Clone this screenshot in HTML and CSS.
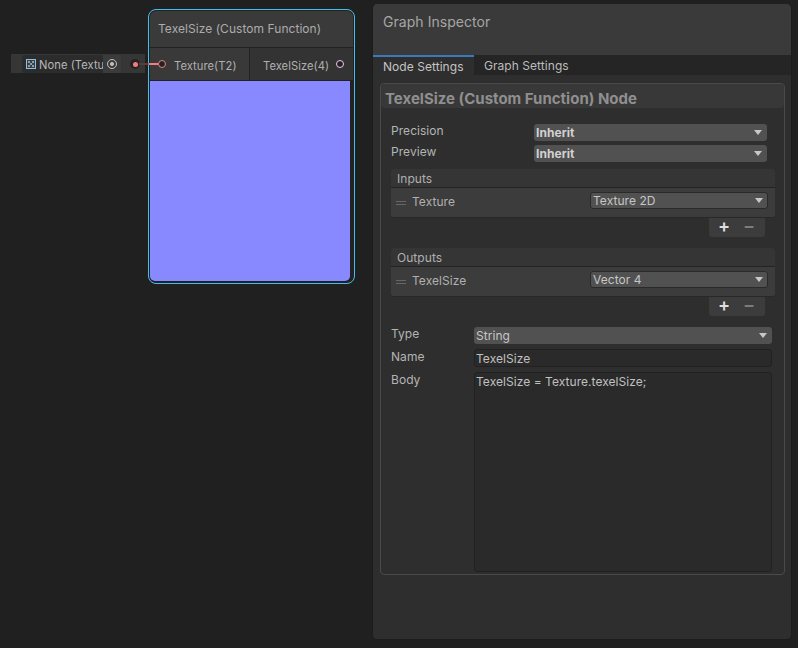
FILE: index.html
```html
<!DOCTYPE html>
<html lang="en">
<head>
    <meta charset="UTF-8">
    <title>Graph Inspector</title>
    <link rel="stylesheet" href="styles.css">
</head>
<body>

<div class="canvas">
    <div class="prop-slot">
        <div class="prop-field">
            <svg class="tex-icon" width="10" height="10" viewBox="0 0 10 10">
                <rect x="0.5" y="0.5" width="9" height="9" fill="#3a4248" stroke="#7fc4e6"/>
                <path d="M2 2h2v2H2zM6 2h2v2H6zM4 4h2v2H4zM2 6h2v2H2zM6 6h2v2H6z" fill="#9a9a9a"/>
            </svg>
            <span class="prop-text">None (Textu</span>
            <span class="prop-picker"><span class="picker-ring"><span class="picker-dot"></span></span></span>
        </div>
        <span class="slot-port"><span class="slot-dot"></span></span>
    </div>

    <div class="node">
        <div class="node-title">TexelSize (Custom Function)</div>
        <div class="node-ports">
            <div class="port-in">
                <span class="port-ring port-ring-in"></span>
                <span>Texture(T2)</span>
            </div>
            <div class="port-out">
                <span>TexelSize(4)</span>
                <span class="port-ring port-ring-out"></span>
            </div>
        </div>
        <div class="node-preview"></div>
    </div>
    <div class="edge"></div>
</div>

<div class="inspector">
    <div class="inspector-head">Graph Inspector</div>
    <div class="tabs">
        <div class="tab tab-active">Node Settings</div>
        <div class="tab">Graph Settings</div>
    </div>
    <div class="inspector-body">
        <div class="section">
            <div class="section-title">TexelSize (Custom Function) Node</div>

            <div class="settings">
                <div class="row">
                    <label class="row-label">Precision</label>
                    <div class="dropdown dropdown-bold">Inherit<span class="caret"></span></div>
                </div>
                <div class="row">
                    <label class="row-label">Preview</label>
                    <div class="dropdown dropdown-bold">Inherit<span class="caret"></span></div>
                </div>
            </div>

            <div class="list">
                <div class="list-head">Inputs</div>
                <div class="list-body">
                    <span class="handle"></span>
                    <span class="list-name">Texture</span>
                    <div class="dropdown list-drop">Texture 2D<span class="caret"></span></div>
                </div>
                <div class="list-foot"><span class="plus">+</span><span class="minus">&minus;</span></div>
            </div>

            <div class="list list-second">
                <div class="list-head">Outputs</div>
                <div class="list-body">
                    <span class="handle"></span>
                    <span class="list-name">TexelSize</span>
                    <div class="dropdown list-drop">Vector 4<span class="caret"></span></div>
                </div>
                <div class="list-foot"><span class="plus">+</span><span class="minus">&minus;</span></div>
            </div>

            <div class="code-form">
                <div class="form-row">
                    <label class="form-label form-label-type">Type</label>
                    <div class="dropdown">String<span class="caret"></span></div>
                </div>
                <div class="form-row">
                    <label class="form-label">Name</label>
                    <div class="text-field">TexelSize</div>
                </div>
                <div class="form-row">
                    <label class="form-label">Body</label>
                    <div class="text-field text-area">TexelSize = Texture.texelSize;</div>
                </div>
            </div>
        </div>
    </div>
</div>

</body>
</html>
```

FILE: styles.css
```css
* {
    box-sizing: border-box;
}
html, body {
    height: 100%;
}
body {
    margin: 0;
    width: 798px;
    height: 648px;
    overflow: hidden;
    display: flex;
    background-color: #202020;
    color: #c4c4c4;
    font-family: Inter, "Noto Sans", sans-serif;
    font-size: 12px;
    line-height: 16px;
    letter-spacing: 0.05px;
}

/* graph canvas, things sit at their own spot here */
.canvas {
    position: relative;
    width: 372px;
    flex: none;
}
.prop-slot {
    position: absolute;
    left: 11px;
    top: 54px;
    width: 134px;
    height: 19px;
    background: #363636;
}
.prop-field {
    position: absolute;
    left: 11px;
    top: 1px;
    width: 99px;
    height: 18px;
    display: flex;
    align-items: center;
    background: #2c2c2c;
    border-radius: 3px;
    overflow: hidden;
}
.tex-icon {
    margin-left: 4px;
    flex: none;
}
.prop-text {
    margin-left: 3px;
    padding-top: 1px;
    width: 64px;
    flex: none;
    overflow: hidden;
    white-space: nowrap;
    font-size: 11.2px;
    color: #b8b8b8;
}
.prop-picker {
    width: 18px;
    height: 18px;
    flex: none;
    display: flex;
    align-items: center;
    justify-content: center;
    background: #3b3b3b;
}
.picker-ring {
    width: 10px;
    height: 10px;
    border: 1px solid #c4c4c4;
    border-radius: 50%;
    display: flex;
    align-items: center;
    justify-content: center;
}
.picker-dot {
    width: 4px;
    height: 4px;
    background: #c4c4c4;
    border-radius: 50%;
}
.slot-port {
    position: absolute;
    left: 119px;
    top: 5px;
    width: 10px;
    height: 10px;
    display: flex;
    align-items: center;
    justify-content: center;
    background: #232323;
    border-radius: 50%;
}
.slot-dot {
    width: 5px;
    height: 5px;
    background: #f27c7c;
    border-radius: 50%;
}
.edge {
    position: absolute;
    left: 139px;
    top: 63px;
    width: 19px;
    height: 2px;
    background: linear-gradient(90deg, #5a3c3c, #5a3c3c 45%, #f08080 55%);
}
.node {
    position: absolute;
    left: 148px;
    top: 9px;
    width: 207px;
    height: 275px;
    padding: 1px;
    border: 1px solid #44c0ec;
    border-radius: 8px;
    background: #222222;
    overflow: hidden;
}
.node-title {
    height: 36px;
    padding: 10px 8px 0;
    background: #3a3a3a;
    border-radius: 6px 6px 0 0;
    font-size: 12px;
    color: #acacac;
}
.node-ports {
    display: flex;
    height: 32px;
    margin-top: 1px;
    font-size: 11.2px;
    color: #b0b0b0;
}
.port-in {
    width: 99px;
    display: flex;
    align-items: center;
    padding: 4px 0 0 24px;
    background: #393939;
    position: relative;
}
.port-out {
    flex: 1;
    display: flex;
    align-items: center;
    padding: 4px 0 0 13px;
    margin-left: 1px;
    background: #333333;
    position: relative;
}
.port-ring {
    position: absolute;
    top: 12px;
    width: 8px;
    height: 8px;
    border-radius: 50%;
    background: #232323;
}
.port-ring-in {
    left: 8px;
    border: 1.5px solid #f08080;
}
.port-ring-out {
    left: 86px;
    border: 1px solid #f0c8f0;
}
.node-preview {
    width: 200px;
    height: 200px;
    margin-top: 1px;
    background: #8888ff;
    border-radius: 0 0 5px 5px;
}

/* inspector */
.inspector {
    width: 420px;
    height: 636px;
    margin-top: 4px;
    border-radius: 5px;
    background: #2e2e2e;
    border: 1px solid #1c1c1c;
    border-top: 0;
    overflow: hidden;
}
.inspector-head {
    height: 51px;
    padding: 9px 10px 0;
    background: #3a3a3a;
    font-size: 14px;
    line-height: 18px;
    color: #a6a6a6;
}
.tabs {
    display: flex;
    height: 20px;
    background: #252525;
    color: #bcbcbc;
    line-height: 21px;
}
.tab {
    padding: 0 10px;
    height: 20px;
}
.tab-active {
    width: 101px;
    background: #2e2e2e;
    border-top: 2px solid #3a79bb;
    line-height: 19px;
    color: #c4c4c4;
}
.inspector-body {
    padding: 8px 6px 0 7px;
}
.section {
    height: 492px;
    border: 1px solid #4a4a4a;
    border-radius: 4px;
}
.section-title {
    height: 24px;
    padding-left: 4px;
    background: #383838;
    border-radius: 4px;
    font-size: 15px;
    font-weight: 700;
    line-height: 29px;
    color: #8f8f8f;
    letter-spacing: 0;
    overflow: hidden;
}
.settings {
    padding: 16px 17px 0 10px;
    display: flex;
    flex-direction: column;
    gap: 4px;
}
.row {
    display: flex;
    height: 17px;
}
.row-label {
    width: 143px;
    flex: none;
    margin-top: -1px;
    color: #b4b4b4;
}
.dropdown {
    position: relative;
    flex: 1;
    height: 17px;
    padding-left: 2px;
    background: #515151;
    border-radius: 3px;
    line-height: 17px;
    color: #c6c6c6;
}
.dropdown-bold {
    font-weight: 700;
    color: #d2d2d2;
}
.caret {
    position: absolute;
    right: 5px;
    top: 6px;
    width: 0;
    height: 0;
    border-left: 4px solid transparent;
    border-right: 4px solid transparent;
    border-top: 5px solid #c8c8c8;
}
.list {
    position: relative;
    margin: 7px 9px 0 10px;
    padding-bottom: 19px;
}
.list-second {
    margin-top: 11px;
}
.list-head {
    height: 19px;
    padding: 1px 0 0 6px;
    background: #353535;
    border-bottom: 1px solid #232323;
    border-radius: 3px 3px 0 0;
    line-height: 17px;
    color: #b0b0b0;
}
.list-body {
    display: flex;
    align-items: center;
    height: 30px;
    padding: 0 7px 0 5px;
    background: #3c3c3c;
    border-bottom: 1px solid #282828;
    border-radius: 0 0 3px 3px;
}
.handle {
    width: 10px;
    height: 4px;
    border-top: 1px solid #666666;
    border-bottom: 1px solid #666666;
    flex: none;
}
.list-name {
    margin: -1px 0 0 6px;
    width: 178px;
    flex: none;
    color: #b0b0b0;
}
.list-drop {
    margin-top: -4px;
    flex: 1;
    border: 1px solid #2a2a2a;
    line-height: 15px;
}
.list-drop .caret {
    top: 5px;
    right: 4px;
}
.list-foot {
    position: absolute;
    right: 10px;
    bottom: 0;
    width: 56px;
    height: 19px;
    padding-bottom: 4px;
    display: flex;
    align-items: center;
    background: #3c3c3c;
    border-radius: 0 0 3px 3px;
    font-size: 18px;
    font-weight: 600;
    line-height: 17px;
}
.plus {
    margin-left: 9px;
    width: 25px;
    color: #dedede;
}
.minus {
    color: #7c7c7c;
}
.code-form {
    margin-top: 11px;
    padding: 0 12px 0 10px;
    display: flex;
    flex-direction: column;
    gap: 5px;
}
.form-row {
    display: flex;
}
.form-label {
    width: 83px;
    flex: none;
    color: #b4b4b4;
}
.form-label-type {
    margin-top: -1px;
}
.text-field {
    flex: 1;
    height: 18px;
    padding: 0 1px;
    background: #2a2a2a;
    border: 1px solid #212121;
    border-radius: 3px;
    line-height: 17px;
    color: #c0c0c0;
}
.text-area {
    height: 200px;
}
```
